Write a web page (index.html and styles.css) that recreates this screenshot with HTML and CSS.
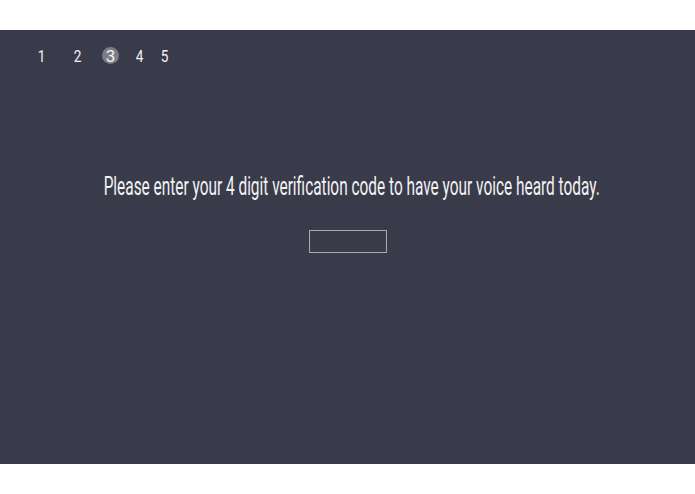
FILE: index.html
```html
<!DOCTYPE html>
<html>
<head>
<meta charset="utf-8">
<link rel="stylesheet" href="styles.css">
</head>
<body>
<div class="top"></div>
<main class="panel">
  <nav class="steps">
    <span class="step s1">1</span>
    <span class="step s2">2</span>
    <span class="step s3 current">3</span>
    <span class="step s4">4</span>
    <span class="step s5">5</span>
  </nav>
  <section class="content">
    <p class="prompt"><span class="prompt-text">Please enter your 4 digit verification code to have your voice heard today.</span></p>
    <input class="code" type="text" maxlength="4">
  </section>
</main>
</body>
</html>
```
FILE: styles.css
```css
html, body {
  margin: 0;
  padding: 0;
  background: #ffffff;
}
body {
  width: 695px;
  height: 494px;
  font-family: Roboto, "Liberation Sans", sans-serif;
  overflow: hidden;
}
.top {
  height: 30px;
}
.panel {
  height: 434px;
  background: #393b4a;
  color: #f2f2f4;
  display: flex;
  flex-direction: column;
}
.steps {
  display: flex;
  align-items: center;
  height: 17px;
  margin-top: 17px;
  padding-left: 33px;
}
.step {
  width: 17px;
  height: 17px;
  display: flex;
  align-items: center;
  justify-content: center;
  font-size: 17px;
  transform: scaleX(0.8);
}
.s2 { margin-left: 19px; }
.s3 { margin-left: 16px; }
.s4 { margin-left: 12px; }
.s5 { margin-left: 8px; }
.current {
  background: #7d7e85;
  border-radius: 50%;
  transform: none;
}
.content {
  display: flex;
  flex-direction: column;
  align-items: center;
  margin-top: 106px;
}
.prompt {
  margin: 0;
  width: 100%;
  box-sizing: border-box;
  padding-left: 9px;
  height: 32px;
  display: flex;
  justify-content: center;
  align-items: center;
  font-size: 25px;
  white-space: nowrap;
  overflow: hidden;
}
.prompt-text {
  display: inline-block;
  flex: none;
  transform: scaleX(0.616);
}
.code {
  margin-top: 28px;
  width: 78px;
  height: 23px;
  box-sizing: border-box;
  border: 1px solid #a9aab1;
  background: transparent;
  outline: none;
  padding: 0;
}
```
